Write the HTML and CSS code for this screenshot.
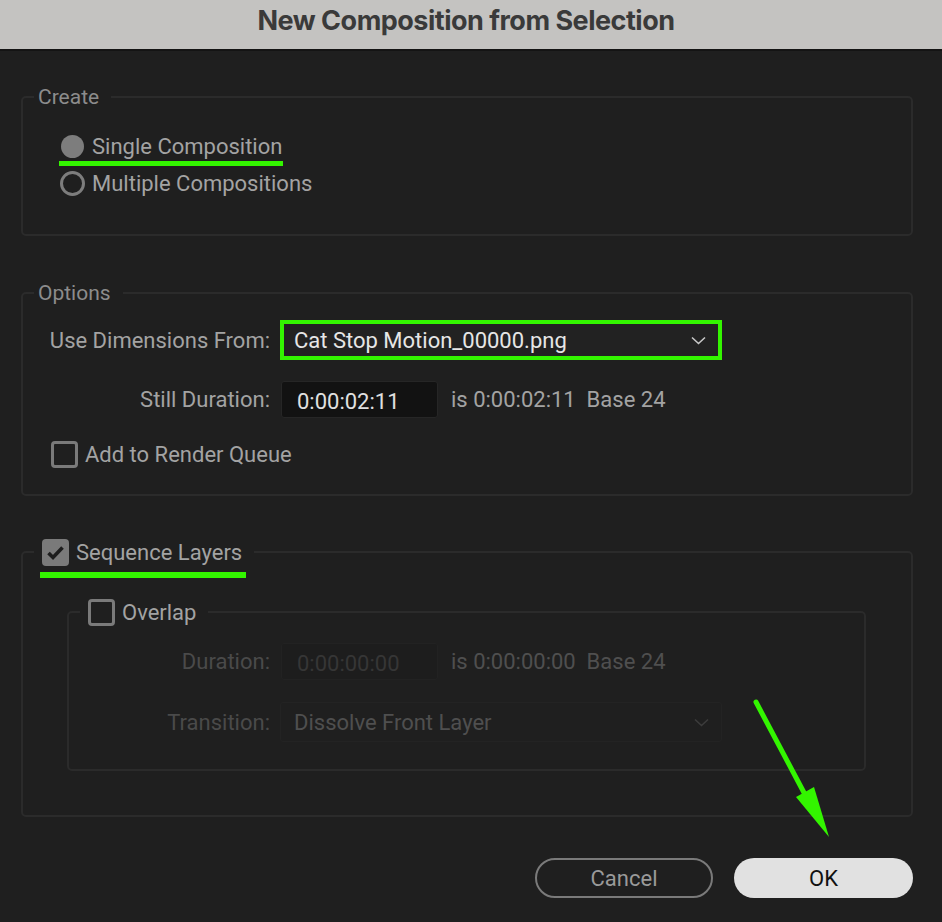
FILE: index.html
```html
<!DOCTYPE html>
<html lang="en">
<head>
  <meta charset="UTF-8">
  <meta name="viewport" content="width=device-width, initial-scale=1.0">
  <title>New Composition from Selection</title>
  <link rel="stylesheet" href="styles.css">
</head>
<body>

  <div class="window">
    <div class="titlebar">New Composition from Selection</div>

    <div class="dialog">
      <!-- Create -->
      <fieldset class="group group-create">
        <legend class="group-title">Create</legend>
        <div class="radio-row marked"><span class="radio checked"></span>Single Composition</div>
        <div class="radio-row"><span class="radio"></span>Multiple Compositions</div>
      </fieldset>

      <!-- Options -->
      <fieldset class="group group-options">
        <legend class="group-title">Options</legend>
        <div class="field-row select-row">
          <span class="field-label">Use Dimensions From:</span>
          <div class="select highlighted">
            <span>Cat Stop Motion_00000.png</span>
            <svg class="chevron" width="15" height="9" viewBox="0 0 15 9"><path d="M1 1.5 L7.5 7.5 L14 1.5" /></svg>
          </div>
        </div>
        <div class="field-row input-row">
          <span class="field-label">Still Duration:</span>
          <div class="time-input">0:00:02:11</div>
          <span class="time-note">is 0:00:02:11&nbsp;&nbsp;Base 24</span>
        </div>
        <div class="check-row render-row">
          <span class="checkbox"></span>Add to Render Queue
        </div>
      </fieldset>

      <!-- Sequence Layers -->
      <fieldset class="group group-sequence">
        <legend class="check-legend marked">
          <span class="checkbox checked">
            <svg width="21" height="17" viewBox="0 0 21 17"><path d="M3.5 9 L8 13.5 L17.5 3.5" /></svg>
          </span>Sequence Layers
        </legend>

        <fieldset class="group group-overlap">
          <legend class="check-legend">
            <span class="checkbox"></span>Overlap
          </legend>
          <div class="field-row input-row disabled">
            <span class="field-label">Duration:</span>
            <div class="time-input">0:00:00:00</div>
            <span class="time-note">is 0:00:00:00&nbsp;&nbsp;Base 24</span>
          </div>
          <div class="field-row select-row disabled">
            <span class="field-label">Transition:</span>
            <div class="select">
              <span>Dissolve Front Layer</span>
              <svg class="chevron" width="15" height="9" viewBox="0 0 15 9"><path d="M1 1.5 L7.5 7.5 L14 1.5" /></svg>
            </div>
          </div>
        </fieldset>
      </fieldset>

      <div class="buttons">
        <button class="btn btn-cancel">Cancel</button>
        <button class="btn btn-ok">OK</button>
      </div>
    </div>

    <!-- annotation arrow -->
    <svg class="pointer" width="942" height="922" viewBox="0 0 942 922">
      <line x1="756" y1="702" x2="810" y2="804" stroke="#33f500" stroke-width="5" stroke-linecap="round" />
      <polygon points="796,797 814,787 829,837" fill="#33f500" />
    </svg>
  </div>

</body>
</html>
```

FILE: styles.css
```css
body {
  margin: 0;
  background-color: #1f1f1f;
  font-family: Roboto, "Noto Sans", sans-serif;
  color: #a3a3a3;
}
.window {
  position: relative;
  width: 942px;
  height: 922px;
  overflow: hidden;
  background-color: #1f1f1f;
}
.titlebar {
  height: 49px;
  border-bottom: 2px solid #141414;
  background-color: #c4c3c1;
  color: #3a3a3a;
  font-family: Inter, Roboto, sans-serif;
  font-weight: 700;
  font-size: 27px;
  line-height: 42px;
  text-align: center;
  padding-right: 10px;
  letter-spacing: -0.5px;
}
.dialog {
  padding: 0 29px 0 21px;
}
.group {
  margin: 0;
  padding: 0 0 0 11px;
  border: 2px solid #2b2b2b;
  border-radius: 5px;
  min-inline-size: 0;
}
.group-title {
  padding: 0 12px 0 4px;
  font-size: 21px;
  line-height: 24px;
  color: #8c8c8c;
}
.group-create {
  margin-top: 34px;
  padding-top: 19px;
  padding-bottom: 32px;
}
.group-options {
  margin-top: 45px;
  padding-top: 15px;
  padding-bottom: 25px;
}
.group-sequence {
  margin-top: 42px;
  padding-top: 32px;
  padding-bottom: 44px;
}
.group-overlap {
  margin: 0 45px 0 33px;
  padding-top: 17px;
  padding-bottom: 27px;
}

/* radios */
.radio-row {
  position: relative;
  display: flex;
  align-items: center;
  height: 37px;
  margin-left: 26px;
  font-size: 22px;
  gap: 7px;
}
.radio {
  box-sizing: border-box;
  width: 25px;
  height: 25px;
  border: 3px solid #7d7d7d;
  border-radius: 50%;
}
.radio.checked {
  width: 23px;
  height: 23px;
  margin: 0 1px;
  border: none;
  background-color: #7d7d7d;
}
.marked::after {
  content: "";
  position: absolute;
  height: 5px;
  background-color: #33f500;
}
.radio-row.marked::after {
  left: -1px;
  top: 33px;
  width: 224px;
}

/* labelled rows */
.field-row {
  display: flex;
  align-items: center;
  font-size: 22px;
}
.field-label {
  width: 236px;
  text-align: right;
}
.group-overlap .field-label {
  width: 190px;
}
.select-row {
  height: 40px;
}
.input-row {
  height: 37px;
  margin-top: 21px;
}
.group-overlap .input-row {
  margin-top: 0;
}
.group-overlap .select-row {
  margin-top: 22px;
}
.select {
  box-sizing: border-box;
  display: flex;
  align-items: center;
  justify-content: space-between;
  width: 442px;
  height: 40px;
  margin-left: 10px;
  padding: 0 12px 0 13px;
  border: 1px solid #232323;
  border-radius: 3px;
  background-color: #1f1f1f;
}
.select.highlighted {
  border: 4px solid #33f500;
  border-radius: 0;
  padding: 0 12px 0 10px;
  background-color: #222;
  color: #e6e6e6;
}
.chevron path {
  fill: none;
  stroke: #c8c8c8;
  stroke-width: 1.6;
}
.time-input {
  box-sizing: border-box;
  width: 157px;
  height: 37px;
  margin-left: 11px;
  padding-left: 15px;
  line-height: 39px;
  border: 1px solid #262626;
  border-radius: 3px;
  background-color: #121212;
  color: #e0e0e0;
}
.time-note {
  margin-left: 13px;
}

/* checkboxes */
.checkbox {
  box-sizing: border-box;
  display: inline-flex;
  align-items: center;
  justify-content: center;
  width: 27px;
  height: 27px;
  border: 3px solid #7a7a7a;
  border-radius: 4px;
}
.checkbox.checked {
  border: none;
  background-color: #7a7a7a;
}
.checkbox.checked path {
  fill: none;
  stroke: #1d1d1d;
  stroke-width: 3.6;
}
.check-row {
  display: flex;
  align-items: center;
  gap: 7px;
  height: 30px;
  margin-top: 21px;
  margin-left: 17px;
  font-size: 22px;
}
.check-legend {
  position: relative;
  display: flex;
  align-items: center;
  gap: 7px;
  height: 28px;
  padding: 0 12px 0 8px;
  font-size: 22px;
}
.check-legend.marked::after {
  left: 6px;
  top: 34px;
  width: 206px;
  height: 6px;
}

/* disabled */
.disabled .field-label {
  color: #4a4a4a;
}
.disabled .time-input {
  background-color: #1d1d1d;
  border-color: #222;
  color: #363636;
}
.disabled .time-note,
.disabled .select {
  color: #4f4f4f;
}
.disabled .chevron path {
  stroke: #3c3c3c;
}

/* buttons */
.buttons {
  display: flex;
  justify-content: flex-end;
  gap: 21px;
  margin-top: 41px;
}
.btn {
  height: 40px;
  border-radius: 20px;
  font-family: Roboto, "Noto Sans", sans-serif;
  font-size: 22px;
}
.btn-cancel {
  width: 178px;
  border: 2px solid #7a7a7a;
  background-color: transparent;
  color: #9a9a9a;
}
.btn-ok {
  width: 179px;
  border: none;
  background-color: #e1e1e1;
  color: #111;
}
.pointer {
  position: absolute;
  left: 0;
  top: 0;
  pointer-events: none;
}
```
